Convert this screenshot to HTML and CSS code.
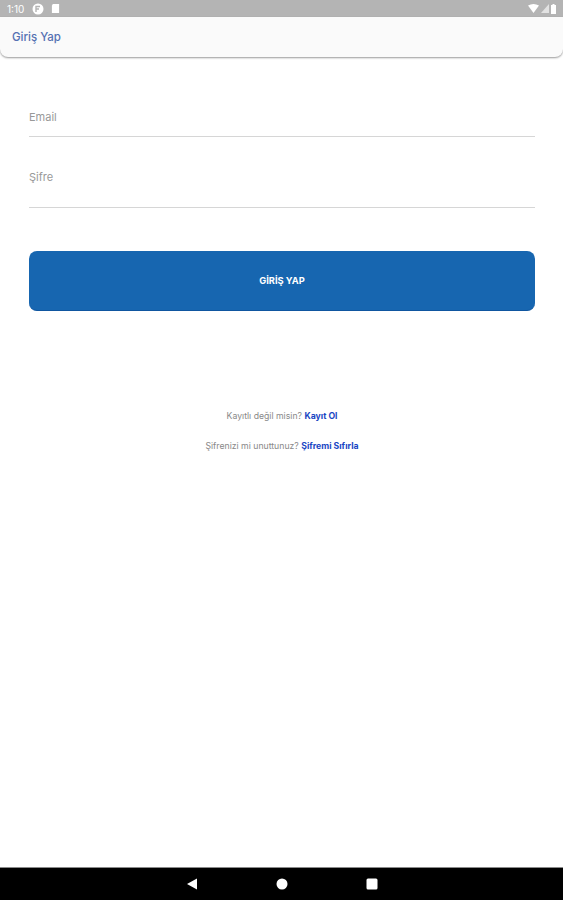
FILE: index.html
```html
<!DOCTYPE html>
<html lang="tr">
<head>
  <meta charset="UTF-8">
  <meta name="viewport" content="width=device-width, initial-scale=1.0">
  <title>Giriş Yap</title>
  <link rel="stylesheet" href="styles.css">
</head>
<body>
  <div id="screen">
    <div class="statusBar">
      <span class="statusTime">1:10</span>
      <svg class="statusIcon" width="12" height="12" viewBox="0 0 12 12"><circle cx="6" cy="6" r="5.500" fill="#fff"/><path d="M4 9V3.500h4M4 6h3" stroke="#b4b4b4" stroke-width="1.400" fill="none"/></svg>
      <svg class="statusIcon" width="9" height="11" viewBox="0 0 10 12"><path d="M2 1h7v10H1V3z" fill="#fff"/></svg>
      <span class="statusRight">
        <svg width="11" height="9" viewBox="0 0 11 9"><path d="M0 1.500Q5.500-1.500 11 1.500L5.500 9z" fill="#fff"/></svg>
        <svg width="8" height="9" viewBox="0 0 8 9"><path d="M8 0v9H0z" fill="#e2e2e2"/></svg>
        <svg width="5" height="10" viewBox="0 0 5 10"><path d="M1.500 0h2v1H5v9H0V1h1.500z" fill="#fff"/></svg>
      </span>
    </div>
    <header class="appBar">Giriş Yap</header>
    <main class="content">
      <div class="field">Email</div>
      <div class="field fieldPassword">Şifre</div>
      <button class="button">GİRİŞ YAP</button>
      <p class="linkRow first">Kayıtlı değil misin? <a href="#">Kayıt Ol</a></p>
      <p class="linkRow">Şifrenizi mi unuttunuz? <a href="#">Şifremi Sıfırla</a></p>
    </main>
    <div class="navBar">
      <svg width="12" height="12" viewBox="0 0 12 12"><path d="M11 0.500v11L1 6z" fill="#fff"/></svg>
      <svg width="12" height="12" viewBox="0 0 12 12"><circle cx="6" cy="6" r="5.500" fill="#fff"/></svg>
      <svg width="12" height="12" viewBox="0 0 12 12"><rect x="0.500" y="0.500" width="11" height="11" rx="1.500" fill="#fff"/></svg>
    </div>
  </div>
</body>
</html>
```

FILE: styles.css
```css
body {
  margin: 0;
  background-color: #ffffff;
  font-family: 'Inter', 'Liberation Sans', sans-serif;
}
#screen {
  width: 563px;
  height: 900px;
  display: flex;
  flex-direction: column;
  overflow: hidden;
}
.statusBar {
  height: 17px;
  flex: none;
  display: flex;
  align-items: center;
  gap: 7px;
  padding: 0 7px;
  background-color: #b4b4b4;
  color: #ffffff;
  font-size: 10px;
}
.statusTime {
  margin-right: 1px;
}
.statusRight {
  margin-left: auto;
  display: flex;
  align-items: center;
  gap: 2px;
}
.appBar {
  height: 40px;
  flex: none;
  box-sizing: border-box;
  padding: 13px 12px 0;
  background-color: #fafafa;
  border-radius: 0 0 8px 8px;
  box-shadow: 0 1px 2px rgba(0, 0, 0, 0.4);
  color: #5571b2;
  font-size: 11.500px;
  font-weight: 500;
  line-height: 15px;
}
.content {
  flex: 1;
  padding: 0 28px 0 29px;
}
.field {
  height: 37px;
  margin-top: 42px;
  border-bottom: 1px solid #d6d6d6;
  color: #999999;
  font-size: 11px;
  line-height: 36px;
}
.fieldPassword {
  height: 46px;
  margin-top: 24px;
  line-height: 32px;
}
.button {
  display: block;
  width: 100%;
  height: 60px;
  margin-top: 43px;
  padding: 0;
  border: none;
  border-bottom: 1px solid #0f56a0;
  border-radius: 8px;
  background-color: #1766b0;
  color: #ffffff;
  font-family: inherit;
  font-size: 9.300px;
  font-weight: 700;
}
.linkRow {
  margin: 0;
  height: 30px;
  text-align: center;
  color: #888888;
  font-size: 8.700px;
  line-height: 30px;
}
.linkRow.first {
  margin-top: 90px;
}
.linkRow a {
  color: #1a47c4;
  font-weight: 700;
  text-decoration: none;
}
.navBar {
  height: 33px;
  flex: none;
  display: flex;
  align-items: center;
  justify-content: center;
  gap: 78px;
  background-color: #000000;
  border-top: 1px solid #8a8a8a;
  box-sizing: border-box;
}
```
